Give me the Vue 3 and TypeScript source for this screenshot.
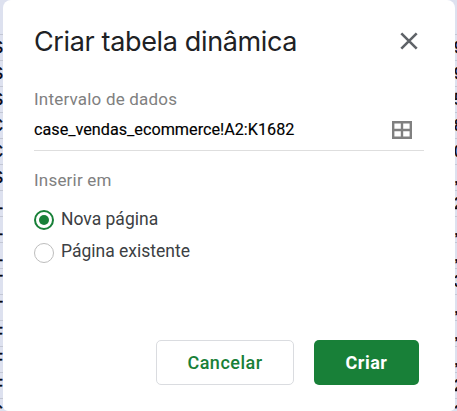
<script setup lang="ts">
import { ref } from 'vue'

const leftCells: string[] = ['S', 'S', 'S', 'C', 'C', 'S', 'L', 'L', 'L', 'T', 'T', 'F', 'F', 'F', 'C']
const rightCells: string[] = ['9', '9', '5', '8', '0', ',', '2', ',', ',', '3', ',', ',', ',', '2', '2']
const options: string[] = ['Nova página', 'Página existente']
const selected = ref(0)
</script>

<template>
  <main class="screen">
    <div class="strip left">
      <div class="head"></div>
      <div v-for="(c, i) in leftCells" :key="i" class="cell">{{ c }}</div>
    </div>
    <section class="dialog">
      <header class="top">
        <h1>Criar tabela dinâmica</h1>
        <svg class="close" viewBox="0 0 18 18"><path d="M1.3 1.3 16.7 16.7M16.7 1.3 1.3 16.7" fill="none" stroke="#5f6368" stroke-width="2.6" /></svg>
      </header>
      <p class="label range-label">Intervalo de dados</p>
      <div class="field">
        <span class="value">case_vendas_ecommerce!A2:K1682</span>
        <svg class="grid" viewBox="0 0 20 18"><path d="M1.2 1.2H18.8V16.8H1.2ZM10 1V17M1 9H19" fill="none" stroke="#808080" stroke-width="2.4" /></svg>
      </div>
      <p class="label insert-label">Inserir em</p>
      <div class="options">
        <div v-for="(o, i) in options" :key="o" class="option" @click="selected = i">
          <span class="radio" :class="{ on: selected === i }"></span>
          <span class="option-text">{{ o }}</span>
        </div>
      </div>
      <footer class="actions">
        <button class="btn cancel">Cancelar</button>
        <button class="btn create">Criar</button>
      </footer>
    </section>
    <div class="strip right">
      <div class="head"></div>
      <div v-for="(c, i) in rightCells" :key="i" class="cell">{{ c }}</div>
    </div>
  </main>
</template>

<style>
body { margin: 0; overflow: hidden; }
</style>

<style scoped>
.screen { display: flex; width: 457px; height: 411px; overflow: hidden; background: #dde1ef; font-family: Roboto, "Liberation Sans", sans-serif; }
.strip { height: 411px; overflow: hidden; display: flex; flex-direction: column; flex: none; }
.left { width: 3px; align-items: flex-end; }
.right { width: 2px; align-items: flex-start; }
.head { box-sizing: border-box; width: 100%; height: 35px; flex: none; border-bottom: 1px solid #c3c7d4; }
.cell { box-sizing: border-box; min-width: 100%; height: 26px; flex: none; border-bottom: 1px solid #c3c7d4; font: 17px/26px "Liberation Sans", sans-serif; color: #05070f; -webkit-text-stroke: 0.4px #05070f; }
.right .cell { text-indent: -1px; }
.dialog { box-sizing: border-box; width: 452px; height: 411px; flex: none; border-radius: 8px 8px 5px 5px; background: #fff; padding: 22px 31px 26px; display: flex; flex-direction: column; }
.top { display: flex; justify-content: space-between; align-items: center; height: 38px; padding-right: 6px; }
h1 { margin: 0; padding-top: 2px; font: 400 27px/38px Inter, sans-serif; letter-spacing: -0.36px; color: #202124; white-space: nowrap; }
.close { width: 18px; height: 18px; }
.label { margin: 0; font-size: 17px; line-height: 22px; letter-spacing: 0.2px; color: #808080; }
.range-label { margin-top: 28px; }
.field { box-sizing: border-box; display: flex; justify-content: space-between; align-items: center; height: 41px; border-bottom: 1px solid #dedede; padding-right: 12px; }
.value { margin-top: -1px; font-size: 16.2px; color: #000; -webkit-text-stroke: 0.15px #000; }
.grid { width: 20px; height: 18px; }
.insert-label { margin-top: 18px; }
.options { margin-top: 12px; }
.option { display: flex; align-items: center; height: 33px; }
.radio { box-sizing: border-box; width: 20px; height: 20px; border: 1px solid #bdbdbd; border-radius: 50%; display: flex; align-items: center; justify-content: center; }
.radio.on { border: 2px solid #188038; }
.radio.on::after { content: ""; width: 10px; height: 10px; border-radius: 50%; background: #188038; }
.option-text { margin-left: 7px; margin-top: -2px; font-size: 17.5px; line-height: 24px; color: #3c4043; }
.option:last-child .option-text { margin-top: -4px; }
.actions { display: flex; justify-content: flex-end; gap: 20px; margin-top: auto; padding-right: 5px; }
.btn { box-sizing: border-box; height: 45px; padding: 0; border-radius: 5px; font: 500 18px/43px Roboto, sans-serif; }
.cancel { width: 138px; border: 1px solid #dadce0; background: #fff; color: #188038; letter-spacing: 0.5px; }
.create { width: 105px; border: 0; background: #188038; color: #fff; font-weight: 700; letter-spacing: 0.5px; }
</style>
